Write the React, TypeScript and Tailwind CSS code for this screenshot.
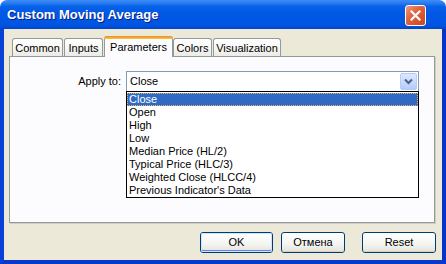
import React from 'react';

const items = [
  'Close',
  'Open',
  'High',
  'Low',
  'Median Price (HL/2)',
  'Typical Price (HLC/3)',
  'Weighted Close (HLCC/4)',
  "Previous Indicator's Data",
];

const tabs = [
  { label: 'Common', cls: 'ml-[3px] w-[51px]' },
  { label: 'Inputs', cls: 'ml-px w-[39px]' },
  { label: 'Parameters', cls: 'ml-px w-[69px]', active: true },
  { label: 'Colors', cls: 'w-[39px]' },
  { label: 'Visualization', cls: 'ml-px w-[68px]' },
];

const XpButton: React.FC<{ label: string; className?: string; isDefault?: boolean }> = ({ label, className, isDefault }) => (
  <div className={`h-[21px] rounded-[3px] border border-[#003C74] bg-[linear-gradient(to_bottom,#FFFFFF_0%,#F4F4F0_60%,#E3E2DA_100%)] flex items-center justify-center text-black ${className}`}>
    <div className={`w-full h-full rounded-[2px] flex items-center justify-center ${isDefault ? 'shadow-[inset_0_0_0_1px_#CEE7FF,inset_0_-1px_0_1px_#6982EE]' : 'shadow-[inset_0_-1px_0_#D6D0C5]'}`}>
      {label}
    </div>
  </div>
);

export default function App() {
  return (
    <div className="w-[446px] h-[264px] bg-white flex flex-col font-['Liberation_Sans',Arial,sans-serif] text-[11px] leading-[13px]">
      {/* title bar */}
      <div className="h-[29px] shrink-0 rounded-t-[7px] bg-[linear-gradient(to_bottom,#3D8DF6_0%,#2A7CF2_10%,#0862E8_22%,#0058E5_45%,#0056E4_80%,#0050DA_93%,#0042C2_100%)] flex items-center pl-[7px] pr-[20px]">
        <span className="text-white font-bold text-[13px] [text-shadow:1px_1px_0_#0A1E84]">Custom Moving Average</span>
        <div className="ml-auto w-[21px] h-[21px] mt-[2px] rounded-[3px] border border-white bg-[linear-gradient(135deg,#F09A7C_0%,#E2643F_40%,#CC4420_100%)] flex items-center justify-center">
          <svg width="11" height="11" viewBox="0 0 11 11">
            <path d="M1.5 1.5 L9.5 9.5 M9.5 1.5 L1.5 9.5" stroke="white" strokeWidth="2.2" strokeLinecap="square" />
          </svg>
        </div>
      </div>

      {/* body */}
      <div className="flex-1 flex flex-col bg-[#ECE9D8] border-l-4 border-b-4 border-r-4 border-l-[#0841D8] border-r-[#0734C8] border-b-[#0838CC] pt-[7px] pl-[5px] pr-[7px]">
        {/* tabs */}
        <div className="h-[20px] flex items-end relative z-10">
          {tabs.map((t) =>
            t.active ? (
              <div key={t.label} className={`h-[21px] -mb-px bg-[#FCFCFE] border-x border-[#919B9C] rounded-t-[3px] flex flex-col ${t.cls}`}>
                <div className="h-[3px] -mx-px rounded-t-[3px] bg-[linear-gradient(to_bottom,#E68B2C,#FFC73C)]" />
                <div className="flex-1 flex items-start justify-center pt-[2px]">{t.label}</div>
              </div>
            ) : (
              <div key={t.label} className={`h-[18px] border-x border-t border-[#919B9C] rounded-t-[3px] bg-[linear-gradient(to_bottom,#FFFFFF_0%,#F7F7F4_50%,#ECEBE6_100%)] flex items-center justify-center pt-px ${t.cls}`}>
                {t.label}
              </div>
            )
          )}
        </div>

        {/* panel */}
        <div className="h-[167px] border border-[#919B9C] bg-[#FCFCFE] shadow-[1px_1px_0_#D0CEBF] pt-[14px]">
          <div className="flex items-center">
            <div className="w-[112px] text-right pr-px">Apply to:</div>
            <div className="ml-[4px] relative w-[293px] h-[21px] border border-[#7F9DB9] bg-white flex items-center">
              <span className="pl-[3px]">Close</span>
              <div className="ml-auto mr-px w-[17px] h-[17px] rounded-[2px] border border-[#B6CBF7] bg-[linear-gradient(to_bottom,#DDE8FE_0%,#C9DAFC_50%,#B5CBF9_100%)] flex items-center justify-center">
                <svg width="9" height="7" viewBox="0 0 9 7">
                  <path d="M1 1.5 L4.5 5 L8 1.5" stroke="#4D6185" strokeWidth="2" fill="none" />
                </svg>
              </div>
              {/* dropdown list */}
              <div className="absolute left-[-1px] top-[19px] w-[293px] border border-black bg-white pt-px z-20">
                {items.map((it, i) => (
                  <div
                    key={it}
                    className={`h-[13px] pl-[2px] whitespace-nowrap ${i === 0 ? 'bg-[#316AC5] text-white border border-dotted border-[#F0B94A] pl-px leading-[11px]' : 'text-black'}`}
                  >
                    {it}
                  </div>
                ))}
              </div>
            </div>
          </div>
        </div>

        {/* buttons */}
        <div className="mt-[9px] flex justify-end">
          <XpButton label="OK" className="w-[73px]" isDefault />
          <XpButton label="Отмена" className="w-[64px] ml-[8px]" />
          <XpButton label="Reset" className="w-[74px] ml-[17px] mr-[-1px]" />
        </div>
      </div>
    </div>
  );
}
